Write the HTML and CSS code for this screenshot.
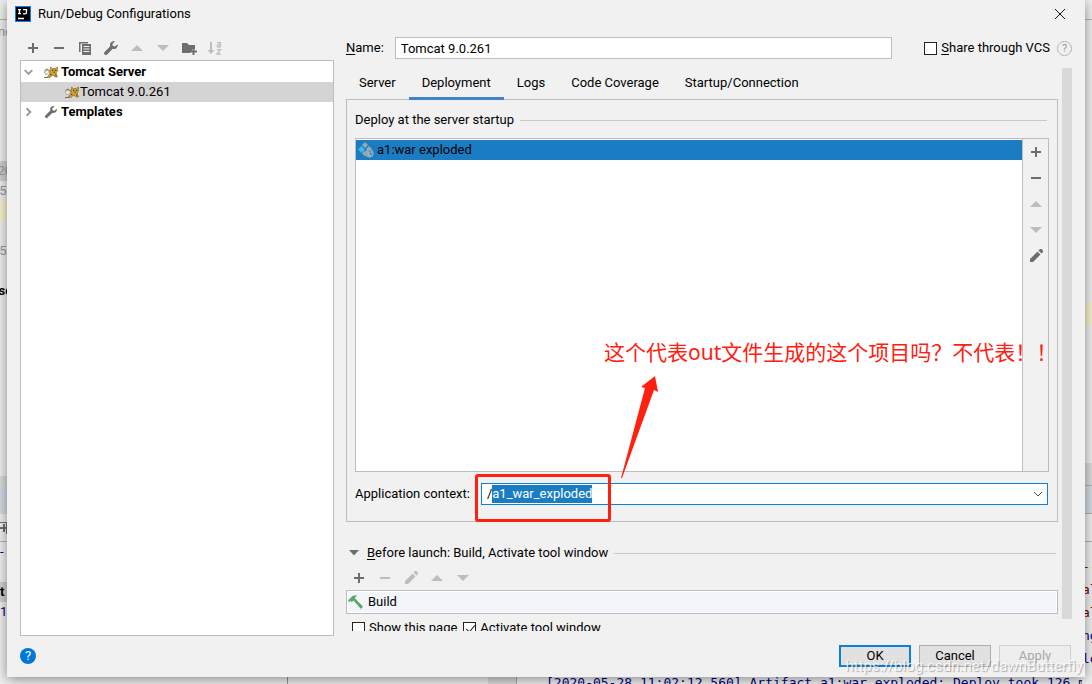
FILE: index.html
```html
<!DOCTYPE html>
<html lang="en">
<head>
<meta charset="utf-8">
<title>Run/Debug Configurations</title>
<link rel="stylesheet" href="styles.css">
</head>
<body>
<svg class="defs" aria-hidden="true">
  <symbol id="plus" viewBox="0 0 16 16"><path d="M7 3h2v4h4v2H9v4H7V9H3V7h4z"/></symbol>
  <symbol id="minus" viewBox="0 0 16 16"><path d="M3 7h10v2H3z"/></symbol>
  <symbol id="up" viewBox="0 0 16 16"><path d="M2 11l6-6 6 6z"/></symbol>
  <symbol id="down" viewBox="0 0 16 16"><path d="M2 5l6 6 6-6z"/></symbol>
  <symbol id="copy" viewBox="0 0 16 16"><path d="M2 2h9v1.500H3.500V12H2z"/><path fill-rule="evenodd" d="M5 4h9v11H5zM6.500 6v1h6V6zm0 2.500v1h6v-1zm0 2.500v1h6v-1z"/></symbol>
  <symbol id="wrench" viewBox="0 0 16 16"><path d="M14.600 4.200L12 6.500 9.800 6 9.400 3.900 12 1.400C9.500.6 6.900 2.300 7 5c0 .5.100.9.200 1.300L1.600 11.900a1.700 1.700 0 0 0 2.500 2.500L9.700 8.800c2.900 1 5.700-1.800 4.900-4.600z"/></symbol>
  <symbol id="folder" viewBox="0 0 16 16"><path d="M1 3h5l2 2h6v4h-3v2H9v2H1z"/><path d="M11.500 8h2v2.500H16v2h-2.500V15h-2v-2.500H9v-2h2.500z"/></symbol>
  <symbol id="sort" viewBox="0 0 16 16"><path d="M3 2h2v8h2.500L4 14 .5 10H3z"/><path fill="none" stroke="currentColor" stroke-width="1.300" d="M10 2.600h3.400V7.500M13.400 4.800h-2.800q-.9 1.200 0 2.100h2.200M9.800 9.700h3.600L10 14h3.800"/></symbol>
  <symbol id="pencil" viewBox="0 0 16 16"><path d="M2 11l7.500-7.500 3 3L5 14H2zM10.500 2.500L12 1l1.500 0L15 2.500V4l-1.500 1.500z"/></symbol>
  <symbol id="tomcat" viewBox="0 0 16 14"><path fill="#f5edc8" stroke="#888" stroke-width=".6" d="M1 7l3-2 3 2-4 3z"/><path fill="none" stroke="#686451" stroke-width=".9" d="M1.500 5.500L4 4l3 2M1 12.500h3l3-3"/><path fill="#d3a32e" stroke="#66521f" stroke-width=".5" d="M7.500 2l2 1.500h2.500L14.500 2v4l-1.500 2 1.500 4H12l-2-2-3 2.500H4l3-4z"/><path fill="#292617" d="M9 4.800h1.300v1H9zM12 4.800h1.300v1H12zM10.500 6.800h1.500v.8h-1.500zM7 9.500l1-1 .5 2zM12 9.500h1.200v2z"/></symbol>
</svg>

<div class="backdrop" aria-hidden="true">
  <div class="edge edge-left">
    <span class="row h20 rule-b"></span>
    <span class="row h23 grey">nc</span>
    <span class="row h118"></span>
    <span class="row h20 picked grey">20</span>
    <span class="row h20 grey">5/</span>
    <span class="row h20 yellow"></span>
    <span class="row h20"></span>
    <span class="row h20 grey">75/</span>
    <span class="row h20"></span>
    <span class="row h20 strong">sc</span>
    <span class="row h175"></span>
    <span class="row h10 band"></span>
    <span class="row h28 blue"></span>
    <span class="row h28 rule-b start"><svg class="ic" viewBox="0 0 16 16"><path d="M0 7h7v2H0zM3 4h2v8H3zM0 2h7v12H6V3H0z"/></svg></span>
    <span class="row h20 navy start">-</span>
    <span class="row h20"></span>
    <span class="row h20 picked strong start">t</span>
    <span class="row h20 navy start">1:</span>
  </div>
  <div class="console">
    <span class="con-tree"></span><span class="con-gutter"></span>
    <code>[2020-05-28 11:02:12,560] Artifact a1:war exploded: Deploy took 126 m</code>
  </div>
  <div class="edge edge-right">
    <span class="row h20 rule-b"></span>
    <span class="row h282"></span>
    <span class="row h23 yellow"></span>
    <span class="row h138"></span>
    <span class="row h23 band rule-b"></span>
    <span class="row h28 blue rule-b"></span>
    <span class="row h28 rule-b"></span>
    <span class="row h13"></span>
    <span class="row h23 red">--</span>
    <span class="row h23 red">al</span>
    <span class="row h23 red">al</span>
    <span class="row h23 navy">ng</span>
    <span class="row h23 navy">lo</span>
  </div>
</div>

<main class="dialog">
  <header class="title">
    <svg class="logo" viewBox="0 0 16 16"><rect width="16" height="16" fill="#087cfa"/><path d="M1 1h14v14H1z"/><path fill="none" stroke="#fff" stroke-width="1.300" d="M3 3.600h3M4.500 3.600v4M3 7.600h3M8 3.600h3.500v3q0 1.200-1.200 1.200H8M3 12.500h6"/></svg>
    <h1>Run/Debug Configurations</h1>
    <button class="close" aria-label="Close"><svg viewBox="0 0 12 12"><path d="M1 1l10 10M11 1L1 11"/></svg></button>
  </header>

  <div class="body">
    <section class="side">
      <div class="bar">
        <button aria-label="Add"><svg><use href="#plus"/></svg></button>
        <button aria-label="Remove"><svg><use href="#minus"/></svg></button>
        <button aria-label="Copy"><svg><use href="#copy"/></svg></button>
        <button aria-label="Edit templates"><svg><use href="#wrench"/></svg></button>
        <button aria-label="Move up" disabled><svg><use href="#up"/></svg></button>
        <button aria-label="Move down" disabled><svg><use href="#down"/></svg></button>
        <button aria-label="New folder"><svg><use href="#folder"/></svg></button>
        <button aria-label="Sort" disabled><svg><use href="#sort"/></svg></button>
      </div>
      <ul class="tree">
        <li class="group"><svg class="chev" viewBox="0 0 16 16"><path d="M4 6l4 4 4-4"/></svg><svg class="ic"><use href="#tomcat"/></svg>Tomcat Server</li>
        <li class="leaf"><svg class="ic"><use href="#tomcat"/></svg>Tomcat 9.0.261</li>
        <li class="group"><svg class="chev" viewBox="0 0 16 16"><path d="M6 4l4 4-4 4"/></svg><svg class="ic"><use href="#wrench"/></svg>Templates</li>
      </ul>
    </section>

    <section class="config">
      <div class="name-row">
        <label for="name"><u>N</u>ame:</label>
        <input id="name" class="text" type="text" value="Tomcat 9.0.261">
        <label class="check"><input type="checkbox"><span><u>S</u>hare through VCS</span></label>
        <button class="hint" aria-label="About sharing">?</button>
      </div>

      <div class="scroll">
        <div class="content">
          <nav class="tabs">
            <button>Server</button><button class="on">Deployment</button><button>Logs</button><button>Code Coverage</button><button>Startup/Connection</button>
          </nav>
          <div class="panel">
            <h2 class="heading">Deploy at the server startup</h2>
            <div class="artifacts">
              <ul class="artifact-list">
                <li><svg class="ic" viewBox="0 0 16 16"><path fill="#9aa7b0" d="M7 0l3 3-3 3-3-3zM11 4l3 3-1 1H9L8 7z"/><path fill="#40b6e0" d="M3.500 4L7 7.500 3.500 11 0 7.500z"/><path fill="#9aa7b0" d="M7 8.500l1 1v4l-1 1L4 11.500z"/><circle cx="11.500" cy="11.500" r="3.700" fill="#4d91c1" stroke="#a6b1ba"/><path fill="#a6b1ba" d="M9 9l3 1-1 2 2 1-1 2-3-2zM13 9l2 2-2 0z"/></svg>a1:war exploded</li>
              </ul>
              <div class="bar vertical">
                <button aria-label="Add artifact"><svg><use href="#plus"/></svg></button>
                <button aria-label="Remove artifact"><svg><use href="#minus"/></svg></button>
                <button aria-label="Artifact up" disabled><svg><use href="#up"/></svg></button>
                <button aria-label="Artifact down" disabled><svg><use href="#down"/></svg></button>
                <button aria-label="Edit artifact"><svg><use href="#pencil"/></svg></button>
              </div>
            </div>
            <div class="context-row">
              <label for="context">Application context:</label>
              <div class="combo">
                <input id="context" type="text" value="/a1_war_exploded">
                <button aria-label="Show contexts"><svg viewBox="0 0 10 10"><path d="M1 3l4 4 4-4"/></svg></button>
                <span class="frame"></span>
              </div>
            </div>
          </div>

          <h2 class="heading launch"><svg class="fold" viewBox="0 0 10 6"><path d="M0 0h10L5 5.500z"/></svg><span><u>B</u>efore launch: Build, Activate tool window</span></h2>
          <div class="bar">
            <button aria-label="Add task"><svg><use href="#plus"/></svg></button>
            <button aria-label="Remove task" disabled><svg><use href="#minus"/></svg></button>
            <button aria-label="Edit task" disabled><svg><use href="#pencil"/></svg></button>
            <button aria-label="Task up" disabled><svg><use href="#up"/></svg></button>
            <button aria-label="Task down" disabled><svg><use href="#down"/></svg></button>
          </div>
          <ul class="tasks">
            <li><svg class="ic" viewBox="0 0 16 16"><path fill="#59a869" d="M0 6.500L4.500 2 9 1 6.800 4.200 15 12.500 13 15 5.500 6.500 3.500 8.500 3 6.500 1.500 8z"/></svg>Build</li>
          </ul>
          <div class="options">
            <label class="check"><input type="checkbox"><span>Show this page</span></label>
            <label class="check"><input type="checkbox" checked><span>Activate tool window</span></label>
          </div>
        </div>
        <div class="thumb"></div>
      </div>
    </section>
  </div>

  <footer class="foot">
    <button class="help" aria-label="Help">?</button>
    <button class="btn primary">OK</button>
    <button class="btn">Cancel</button>
    <button class="btn" disabled>Apply</button>
  </footer>

  <p class="note">这个代表out文件生成的这个项目吗？不代表！！</p>
  <svg class="arrow" viewBox="0 0 40 106"><path d="M1 104L25 14 21 13 35 2 38 18 34 16 2 104z"/></svg>
  <p class="mark">https://blog.csdn.net/dawnButterfly</p>
</main>
<script src="script.js"></script>
</body>
</html>
```
FILE: styles.css
```css
* { box-sizing: border-box; }

body {
  margin: 0;
  display: grid;
  height: 100vh;
  overflow: hidden;
  background: #f0f0f0;
  color: #000;
  font: 13px/20px Roboto, "Noto Sans CJK SC", sans-serif;
}

button, input { font: inherit; color: inherit; }
button { padding: 0; border: 0; background: none; }
h1, h2, p, ul { margin: 0; padding: 0; font: inherit; list-style: none; }
u { text-underline-offset: 2px; }
.defs { position: absolute; width: 0; height: 0; }
.ic { width: 16px; height: 16px; flex: none; fill: #6e6e6e; }

/* Editor window behind the dialog */
.backdrop {
  grid-area: 1 / 1;
  display: grid;
  grid-template-columns: 12px 1fr 10px;
  min-height: 0;
  overflow: hidden;
}
.edge { display: flex; flex-direction: column; overflow: hidden; }
.row { display: flex; align-items: center; flex: none; overflow: hidden; white-space: nowrap; }
.edge-left .row { justify-content: flex-end; }
.edge-left .start { justify-content: flex-start; }
.edge-right .row { font-family: "DejaVu Sans Mono", monospace; }
.h10 { height: 10px; }
.h13 { height: 13px; }
.h20 { height: 20px; }
.h23 { height: 23px; }
.h28 { height: 28px; }
.h118 { height: 118px; }
.h138 { height: 138px; }
.h175 { height: 175px; }
.h282 { height: 282px; }
.rule-b { border-bottom: 1px solid #b4b4b4; }
.picked { background: #d0d0d0; }
.band { background: #dcdcdc; }
.blue { background: #d5dce5; }
.yellow { background: #f7f3cf; }
.grey { color: #999; }
.strong { font-weight: 700; }
.navy { color: #000080; }
.red { color: #7f0000; }
.console { align-self: end; display: flex; height: 10px; overflow: hidden; }
.con-tree { flex: none; width: 276px; border-right: 1px solid #999; }
.con-gutter { flex: none; width: 229px; border-right: 1px solid #aaa; background: linear-gradient(90deg, #f0f0f0 200px, #dcdcdc 200px); }
.console code { margin-left: 29px; font: 13px/18px "DejaVu Sans Mono", monospace; color: #000080; white-space: nowrap; }

/* Dialog */
.dialog {
  grid-area: 1 / 1;
  position: relative;
  display: flex;
  flex-direction: column;
  min-width: 0;
  min-height: 0;
  margin: 0 7px 7px;
  background: #f1f1f1;
  box-shadow: 0 2px 12px rgba(0, 0, 0, .45);
}
.title { display: flex; align-items: center; gap: 7px; height: 28px; padding: 0 19px 0 8px; }
.logo { width: 16px; height: 16px; }
.close { width: 12px; height: 12px; margin-left: auto; }
.close svg { display: block; fill: none; stroke: #111; }

.body { flex: 1; display: flex; gap: 12px; min-height: 0; padding: 8px 13px 0; }
.side { flex: 0 0 314px; display: flex; flex-direction: column; }

.bar { display: flex; height: 24px; }
.bar button { display: grid; place-items: center; width: 26px; height: 24px; fill: #6e6e6e; color: #6e6e6e; }
.bar button:disabled { fill: #bdbdbd; color: #bdbdbd; }
.bar svg { width: 16px; height: 16px; }
.bar.vertical { flex-direction: column; height: auto; border-left: 1px solid #c0c0c0; }
.bar.vertical button { height: 26px; width: 25px; }

.tree { flex: 1; padding: 1px 0; border: 1px solid #bdbdbd; background: #fff; }
.tree li { display: flex; align-items: center; height: 20px; }
.tree .group { font-weight: 700; }
.tree .ic { margin-left: 7px; height: 14px; }
.tree .group .ic { margin-right: 2px; }
.tree .leaf { padding-left: 36px; background: #d4d4d4; }
.chev { width: 15px; height: 16px; fill: none; stroke: #999; stroke-width: 2; }

.config { flex: 1; display: flex; flex-direction: column; min-width: 0; padding-bottom: 5px; }
.name-row { display: flex; align-items: center; height: 24px; }
.name-row .text {
  flex: 1;
  min-width: 0;
  height: 22px;
  margin: 0 32px 0 11px;
  padding: 0 5px;
  border: 1px solid #bdbdbd;
  background: #fff;
}
.check { display: flex; align-items: center; gap: 4px; white-space: nowrap; }
.check input {
  appearance: none;
  flex: none;
  width: 13px;
  height: 13px;
  margin: 0;
  border: 1px solid #222;
  background: #fff;
}
.check input:checked::after {
  content: "";
  display: block;
  width: 4px;
  height: 8px;
  margin-left: 4px;
  border: solid #222;
  border-width: 0 1px 1px 0;
  transform: rotate(40deg);
}
.hint {
  width: 15px;
  height: 15px;
  margin-left: 7px;
  border: 1px solid #a9b6bd;
  border-radius: 50%;
  color: #8b98a0;
  font-size: 11px;
  line-height: 13px;
}

.scroll { flex: 1; display: flex; gap: 4px; min-height: 0; margin-top: 8px; overflow: hidden; }
.content { flex: 1; min-width: 0; }
.thumb { width: 10px; margin-bottom: 12px; background: #d9d9d9; }

.tabs { display: flex; height: 32px; margin-bottom: -1px; position: relative; }
.tabs button { padding: 0 13px; border-bottom: 3px solid transparent; }
.tabs .on { border-color: #4083c9; }

.panel { padding: 10px 8px 16px; border: 1px solid #bdbdbd; }
.heading { display: flex; align-items: center; gap: 6px; padding-right: 2px; }
.heading::after { content: ""; flex: 1; height: 1px; background: #c9c9c9; }
.artifacts { display: flex; height: 334px; margin-top: 8px; border: 1px solid #bdbdbd; }
.artifact-list { flex: 1; padding-top: 1px; background: #fff; }
.artifact-list li { display: flex; align-items: center; gap: 3px; height: 20px; padding-left: 2px; background: #1a7dc4; }

.context-row { display: flex; align-items: center; gap: 11px; margin-top: 11px; }
.combo {
  position: relative;
  flex: 1;
  display: flex;
  height: 22px;
  margin-right: 1px;
  padding: 1px;
  border: 1px solid #0a80d8;
  background: #fff;
}
.combo input { flex: 1; min-width: 0; padding: 0 4px; border: 0; outline: 0; background: none; }
.combo input::selection { background: #1a7dc4; color: #fff; }
.combo button { width: 16px; }
.combo svg { width: 10px; height: 10px; fill: none; stroke: #555; }
.frame {
  position: absolute;
  top: -10px;
  left: -7px;
  width: 136px;
  height: 48px;
  border: 3px solid #ff2010;
  border-radius: 3px;
  pointer-events: none;
}

.launch { margin-top: 21px; padding-left: 3px; }
.launch .fold { width: 10px; height: 6px; margin-right: 2px; fill: #6e6e6e; }
.launch + .bar { margin: 3px 0 0; }
.tasks { padding: 1px; border: 1px solid #bdbdbd; background: #fff; }
.tasks li { display: flex; align-items: center; gap: 4px; height: 20px; padding-left: 0; background: #f2f5fa; }
.options { display: flex; gap: 6px; margin-top: 4px; padding-left: 6px; }

.foot { display: flex; align-items: center; gap: 8px; height: 41px; padding: 0 14px 2px 13px; }
.help { width: 16px; height: 16px; margin-right: auto; border-radius: 50%; background: #0078d7; color: #fff; line-height: 16px; }
.btn { width: 72px; height: 22px; border: 1px solid #adadad; background: #e1e1e1; line-height: 18px; }
.btn.primary { border: 2px solid #0a80d8; }
.btn:disabled { border-color: #d0d0d0; background: #eee; color: #a8a8a8; }

/* Notes drawn over the dialog */
.note {
  position: absolute;
  top: 337px;
  left: 597px;
  color: #ff2010;
  font: 21px/30px "Noto Sans", "Noto Sans CJK SC", sans-serif;
  white-space: nowrap;
}
.arrow { position: absolute; top: 374px; left: 613px; width: 40px; height: 106px; fill: #ff2010; }
.mark {
  position: absolute;
  right: 2px;
  bottom: 0;
  color: rgba(255, 255, 255, .8);
  font: 15px/22px Roboto, sans-serif;
  text-shadow: 1px 1px 1px rgba(0, 0, 0, .3);
  pointer-events: none;
}
```
FILE: script.js
```js
const context = document.getElementById("context");
context.focus();
context.setSelectionRange(1, context.value.length);
```
